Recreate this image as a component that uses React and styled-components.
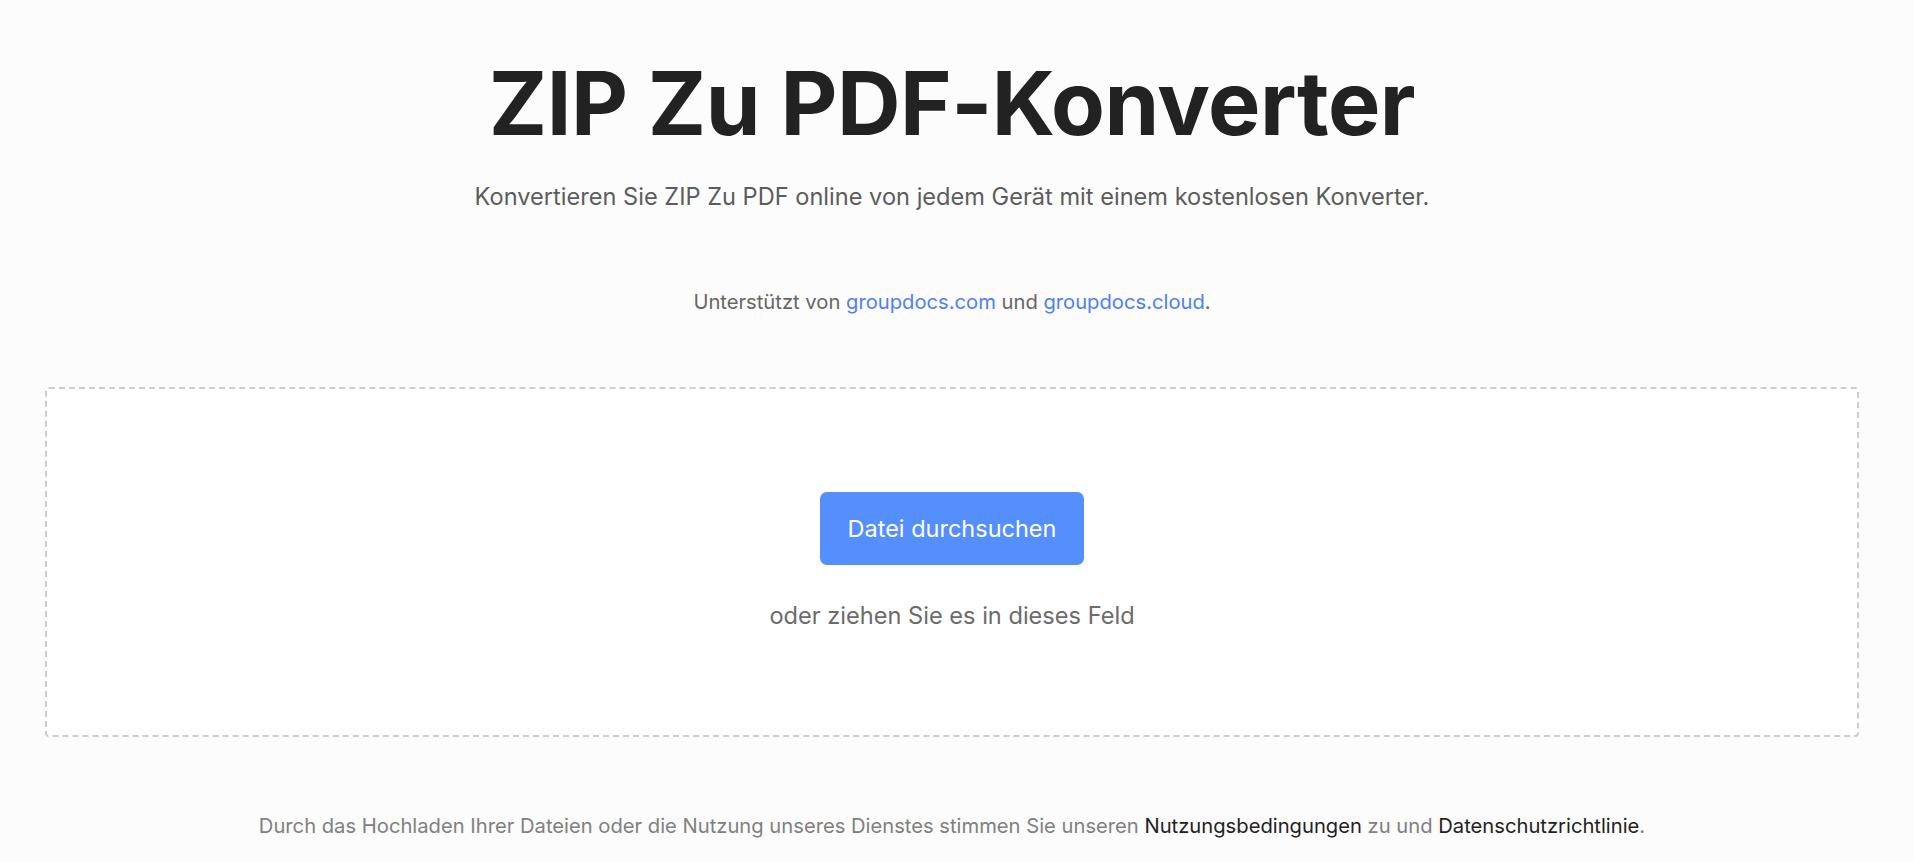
import React from "react";
import styled, { createGlobalStyle } from "styled-components";

const GlobalStyle = createGlobalStyle`
  html, body {
    margin: 0;
    padding: 0;
    background: #fcfcfc;
  }
  body {
    font-family: Inter, "Noto Sans", Arial, sans-serif;
    -webkit-font-smoothing: antialiased;
  }
`;

const Page = styled.main`
  display: flex;
  flex-direction: column;
  align-items: center;
  padding: 0 55px 0 45px;
  box-sizing: border-box;
  width: 100%;
`;

const Title = styled.h1`
  margin: 50px 0 0;
  font-size: 88px;
  font-weight: 700;
  line-height: 106px;
  color: #222222;
  letter-spacing: -0.5px;
  text-align: center;
`;

const Subtitle = styled.p`
  margin: 26px 0 0;
  font-size: 23.6px;
  line-height: 30px;
  color: #5c5c5c;
  text-align: center;
`;

const Powered = styled.p`
  margin: 76px 0 0;
  font-size: 20.2px;
  line-height: 28px;
  color: #666666;
  text-align: center;
`;

const BlueLink = styled.a`
  color: #4f80f5;
  text-decoration: none;
`;

const DropZone = styled.section`
  margin-top: 71px;
  width: 100%;
  height: 350px;
  box-sizing: border-box;
  border: 2px dashed #cdcdcd;
  border-radius: 4px;
  background: #ffffff;
  display: flex;
  flex-direction: column;
  align-items: center;
  justify-content: flex-start;
  padding-top: 103px;
`;

const BrowseButton = styled.button`
  height: 73px;
  padding: 0 28px;
  border: none;
  border-radius: 7px;
  background: #558ffd;
  color: #ffffff;
  font-family: inherit;
  font-size: 23.5px;
  cursor: pointer;
`;

const DropHint = styled.p`
  margin: 36px 0 0;
  font-size: 23.6px;
  line-height: 30px;
  color: #6b6b6b;
`;

const Terms = styled.p`
  margin: 75px 0 0;
  font-size: 20.2px;
  line-height: 28px;
  color: #808080;
  text-align: center;
`;

const DarkLink = styled.a`
  color: #222222;
  text-decoration: none;
`;

export default function App() {
  return (
    <>
      <GlobalStyle />
      <Page>
        <Title>ZIP Zu PDF-Konverter</Title>
        <Subtitle>
          Konvertieren Sie ZIP Zu PDF online von jedem Gerät mit einem kostenlosen Konverter.
        </Subtitle>
        <Powered>
          Unterstützt von <BlueLink href="#">groupdocs.com</BlueLink> und{" "}
          <BlueLink href="#">groupdocs.cloud</BlueLink>.
        </Powered>
        <DropZone>
          <BrowseButton>Datei durchsuchen</BrowseButton>
          <DropHint>oder ziehen Sie es in dieses Feld</DropHint>
        </DropZone>
        <Terms>
          Durch das Hochladen Ihrer Dateien oder die Nutzung unseres Dienstes stimmen Sie unseren{" "}
          <DarkLink href="#">Nutzungsbedingungen</DarkLink> zu und{" "}
          <DarkLink href="#">Datenschutzrichtlinie</DarkLink>.
        </Terms>
      </Page>
    </>
  );
}
